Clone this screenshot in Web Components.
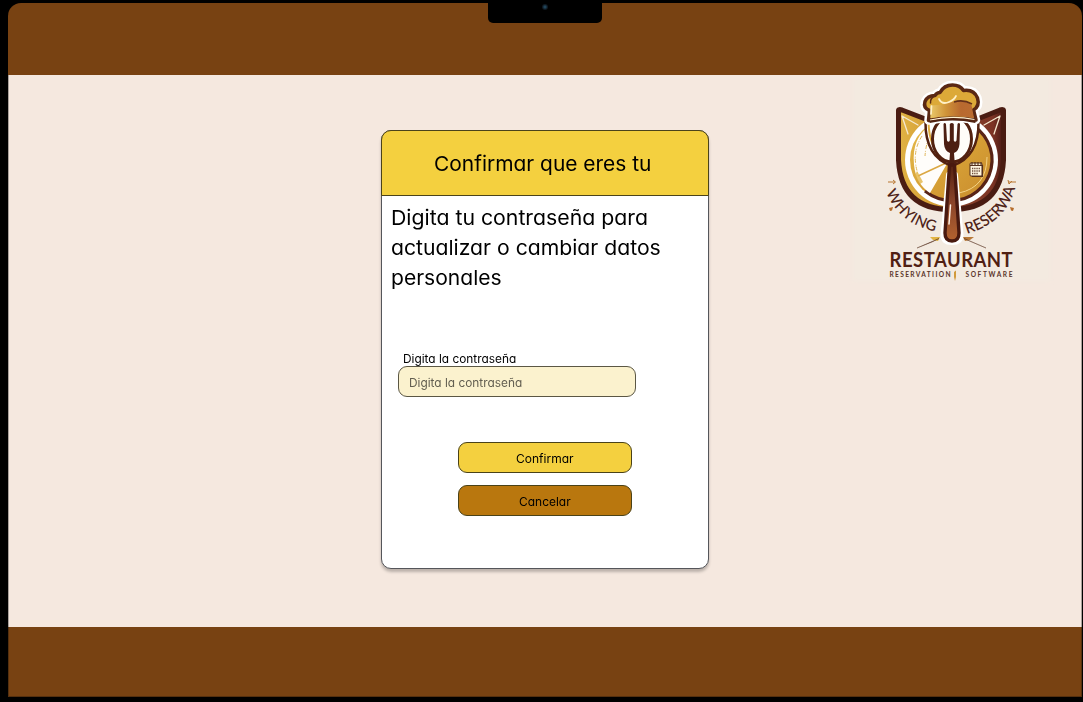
<!DOCTYPE html>
<html lang="es">
<head>
<meta charset="utf-8">
<title>Confirmar que eres tu</title>
<style>
html,body{margin:0;height:100%;background:#000;overflow:hidden}
body{font-family:Inter,"Open Sans",sans-serif;font-feature-settings:"cv11" 1;color:#000}
</style>
</head>
<body>
<device-screen>
  <confirm-card>
    <fit-text slot="title" width="217">Confirmar que eres tu</fit-text>
    <fit-text width="256">Digita tu contraseña para</fit-text>
    <fit-text width="269.5">actualizar o cambiar datos</fit-text>
    <fit-text width="110">personales</fit-text>
    <password-field slot="field">
      <fit-text slot="label" width="113">Digita la contraseña</fit-text>
      <fit-text width="113">Digita la contraseña</fit-text>
    </password-field>
    <action-button slot="actions"><fit-text width="57">Confirmar</fit-text></action-button>
    <action-button slot="actions" style="--fill:#b9770e"><fit-text width="51.5">Cancelar</fit-text></action-button>
  </confirm-card>
  <restaurant-logo></restaurant-logo>
</device-screen>
<script>
function define(name, html, ready) {
  const template = document.createElement('template');
  template.innerHTML = html;
  customElements.define(name, class extends HTMLElement {
    constructor() {
      super();
      this.attachShadow({mode: 'open'}).append(template.content.cloneNode(true));
    }
    connectedCallback() { if (ready) ready(this); }
  });
}

define('device-screen', `
<style>
:host{display:block;position:relative;box-sizing:border-box;height:702px;padding:3px 1px 5px 8px;background:#000}
.screen{display:grid;grid-template-rows:72px 552px 70px;height:694px;border-radius:13px 13px 0 0;overflow:hidden;background:#784212}
main{display:grid;grid-template-columns:328px 210px;column-gap:136px;padding-left:373px;align-items:start;background:#f5e8df;box-shadow:inset 1px 0 #aaa19c,inset -1px 0 #aaa19c}
footer{border:solid #55300f;border-width:0 1px 1px}
.notch{position:absolute;left:488px;top:0;width:114px;height:23px;border-radius:0 0 5px 5px;background:#000}
.notch i{position:absolute;left:54px;top:4px;width:6px;height:6px;border-radius:50%;background:radial-gradient(#204459 0 20%,#101b24 55%,#0b0d0f)}
</style>
<div class="screen"><header></header><main><slot></slot></main><footer></footer></div>
<div class="notch"><i></i></div>`);

define('confirm-card', `
<style>
:host{display:flex;flex-direction:column;box-sizing:border-box;width:328px;height:439px;margin-top:55px;border:1px solid #55565a;border-radius:10px;background:#fff;box-shadow:0 3px 3px #0000003d}
header{display:flex;align-items:center;justify-content:center;box-sizing:border-box;height:66px;margin:-1px -1px 0;border:1px solid #4b431a;border-radius:10px 10px 0 0;background:#f4d03f;font-size:20.4px;padding-right:5px;padding-top:1px}
.message{box-sizing:border-box;height:155px;padding:7px 0 0 9px;font-size:20.4px;line-height:30px}
.actions{display:grid;gap:12px;justify-content:center;margin-top:45px;padding-right:1px}
</style>
<header><slot name="title"></slot></header>
<div class="message"><slot></slot></div>
<slot name="field"></slot>
<div class="actions"><slot name="actions"></slot></div>`);

define('password-field', `
<style>
:host{display:block;padding-left:16px;font-size:11.5px;line-height:15px}
.label{box-sizing:border-box;padding:1px 0 0 4.500px;height:15px}
.box{box-sizing:border-box;display:flex;align-items:center;width:238px;height:31px;padding:4px 0 0 10px;border:1px solid #5b5744;border-radius:9px;background:#fbf2ce;color:#625e50}
</style>
<div class="label"><slot name="label"></slot></div><div class="box"><slot></slot></div>`);

define('action-button', `
<style>
:host{display:flex;align-items:center;justify-content:center;box-sizing:border-box;width:174px;height:31px;padding-top:2px;border:1px solid #4a4218;border-radius:9px;background:var(--fill,#f4d03f);font-size:11.5px}
</style><slot></slot>`);

/* Text line whose glyphs are widened so that it spans the given width. */
define('fit-text', `<style>:host{display:block;white-space:nowrap}span{display:inline-block;transform-origin:0 50%}</style><span><slot></slot></span>`, el => {
  const span = el.shadowRoot.querySelector('span');
  const target = +el.getAttribute('width') + .5;
  el.style.width = target + 'px';
  span.style.transform = 'scaleX(' + target / span.offsetWidth + ')';
});

define('restaurant-logo', `
<style>
:host{display:block;width:210px;height:215px;font-family:Lato,sans-serif}
svg{display:block;width:210px;height:215px}
</style>
<svg viewBox="845 75 210 215">
  <defs>
    <linearGradient id="gold" x1="0" y1="0" x2="1" y2="1"><stop offset="0" stop-color="#e6bd4d"/><stop offset=".5" stop-color="#d7a136"/><stop offset="1" stop-color="#c88a2d"/></linearGradient>
    <linearGradient id="shield" x1="0" x2="1"><stop offset="0" stop-color="#e0b244"/><stop offset=".5" stop-color="#cf952f"/><stop offset=".55" stop-color="#8c442b"/><stop offset=".9" stop-color="#7c3324"/><stop offset="1" stop-color="#471a15"/></linearGradient>
    <linearGradient id="band" x1="0" x2="1"><stop offset="0" stop-color="#e9c86a"/><stop offset=".35" stop-color="#d09539"/><stop offset=".7" stop-color="#b8692f"/><stop offset="1" stop-color="#ba6c31"/></linearGradient>
    <linearGradient id="handle" x1="0" y1="0" x2="0" y2="1"><stop offset="0" stop-color="#542213"/><stop offset=".5" stop-color="#8b452a"/><stop offset="1" stop-color="#b3622f"/></linearGradient>
    <path id="hatShape" d="M928.500 120.500L929.500 110.500Q923 108 925 101.500Q927.500 95.500 935 95.500Q937 92.500 940 92.500Q944 85 952.500 85Q960 85 963.500 90.500Q974 89 977.500 98Q980 106 973.500 110L976 120Q952 116 928.500 120.500Z"/>
    <path id="leftArc" d="M886 192Q901 227 940 232"/>
    <path id="rightArc" d="M967 234Q1008 222 1016 184"/>
    <filter id="soft" x="-10%" y="-10%" width="120%" height="120%"><feGaussianBlur stdDeviation="2"/></filter>
  </defs>
  <rect x="853" y="78" width="197" height="203" fill="#f3eae0" filter="url(#soft)"/>

  <path d="M898.500 110.500Q898.500 109 902 110L928 120H975L1000 110Q1003.500 109 1003.500 110.500V160Q1001 209.500 951 209.500Q901 209.500 898.500 160Z" fill="url(#shield)" stroke="#4a1c12" stroke-width="5" stroke-linejoin="round"/>
  <path d="M902 116L918 125M902 116L908 134M1000 116L984 125M1000 116L994 134" stroke="#f5e8cf" stroke-width="1.300" stroke-linecap="round"/>
  <circle cx="951.500" cy="160" r="46.500" fill="#fff"/>
  <circle cx="951.500" cy="160" r="41.500" fill="url(#gold)"/>
  <path d="M968 123A40.500 40.500 0 0 1 951.500 200.500Q937 200.500 925 191" fill="none" stroke="#592417" stroke-width="3.200"/>
  <path d="M914 165Q911 137 932 124L948 162L930 193Q916 184 914 165Z" fill="#fffdfa"/>
  <path d="M946 163L918 176" stroke="#dba742" stroke-width="1.500"/>
  <path d="M922 136Q911 153 918 174M932 130Q926 142 925 156" fill="none" stroke="#dfb558" stroke-width="1" stroke-dasharray="4 2 1 1"/>
  <path d="M917 171L923 182L920 184L915 175Z" fill="#e2b548" opacity=".8"/>
  <path d="M987 157Q987 187 959 193" fill="none" stroke="#f4d386" stroke-width="1"/>

  <path d="M925.500 122Q925 157 952 166Q979 157 978.500 122" fill="#fff" stroke="#53210f" stroke-width="2.500"/>
  <path d="M928.500 122Q929 149 945 159" fill="none" stroke="#e0ad3d" stroke-width="2"/>
  <ellipse cx="952" cy="139" rx="19.500" ry="23" fill="#fffdf9" stroke="#53210f" stroke-width="3"/>

  <use href="#hatShape" fill="#fff" stroke="#fff" stroke-width="8.500" stroke-linejoin="round"/>
  <use href="#hatShape" fill="#dca938" stroke="#5a2814" stroke-width="3.500" stroke-linejoin="round"/>
  <path d="M930.500 105Q940 106 952 102Q963 99 971.500 105L974 118Q952 114 930.500 118Z" fill="url(#band)"/>
  <path d="M954 102Q963 99 972 104" fill="none" stroke="#65301a" stroke-width="1.500"/>
  <path d="M930 120Q952 115 974.500 119.500" fill="none" stroke="#fff1d0" stroke-width="1.200"/>
  <path d="M929.500 122Q952 117 975.500 122" fill="none" stroke="#512312" stroke-width="2"/>
  <path d="M939 99Q942 105 949 102Q954 100 956 96M931.500 106L931 114" fill="none" stroke="#fff0c7" stroke-width="1.700" stroke-linecap="round"/>
  <path d="M935 96Q930 98 930.500 103" fill="none" stroke="#5a2814" stroke-width="1.500" stroke-linecap="round"/>

  <path d="M949.500 175L944 235Q944 241.500 952 241.500Q960 241.500 960 235L954.500 175Z" fill="#fff" stroke="#fff" stroke-width="7" stroke-linejoin="round"/>
  <path d="M943.500 124Q944.500 122 946 124L947 140.500Q948.500 143 949.800 140.500V124Q951.800 122 953.800 124V140.500Q955 143 956.500 140.500L957.500 124Q959 122 960 124L959.500 144Q959 151 954 153L956 180H948L950 153Q944.500 151 944 144Z" fill="#4d1f12"/>
  <path d="M949.500 165L945 233Q945 241 952 241Q959 241 959 233L954.500 165Z" fill="url(#handle)" stroke="#49190f" stroke-width="3.400"/>
  <path d="M950.500 205L949 224" stroke="#fff0e4" stroke-width="1.500" stroke-linecap="round"/>

  <g transform="translate(970 162)">
    <rect x="0" y="1" width="12" height="13" rx="1" fill="#fff5df" stroke="#54301d"/>
    <path d="M0 3.500H12M2 0V3M5 0V3M8 0V3M11 0V3M12.500 3V14.500H2" stroke="#54301d" stroke-width="1.100" fill="none"/>
    <path d="M2 6.500H10.500M2 9H10.500M2 11.500H8" stroke="#6b4a38" stroke-width="1.300" stroke-dasharray="1.300 .9"/>
  </g>

  <g fill="#4d2217" font-weight="500">
    <text font-size="15" textLength="66" lengthAdjust="spacing"><textPath href="#leftArc">WHYING</textPath></text>
    <text font-size="15.500" textLength="70" lengthAdjust="spacingAndGlyphs"><textPath href="#rightArc">RESERWA</textPath></text>
  </g>
  <path d="M888 182H895M893 180L895.500 182L893 184M1016 182H1009M1008 180L1009 184L1012 181" stroke="#b97731" stroke-width="1" fill="none"/>
  <path d="M889 208L893 207L892 210.500L890 211ZM1014 208L1010 207L1011 210.500L1013 211Z" fill="#b66d2c"/>
  <path d="M930 237H940L938 241L933 240Z" fill="#e2b444"/><path d="M963 237H974L970 240L965 241Z" fill="#b87938"/>
  <path d="M917 248L939 238.500L932 242ZM986 248L964 238.500L972 242Z" fill="#55301f" stroke="#55301f" stroke-width=".4"/>
  <text transform="translate(889.500 266.800) scale(.88 1)" font-size="21" font-weight="700" fill="#502013" textLength="140" lengthAdjust="spacing">RESTAURANT</text>
  <text x="889.500" y="276.500" font-size="6.600" font-weight="700" fill="#5a3429" textLength="61" lengthAdjust="spacing">RESERVATIION</text>
  <text x="965.500" y="276.500" font-size="6.600" font-weight="700" fill="#5a3429" textLength="47" lengthAdjust="spacing">SOFTWARE</text>
  <path d="M954 272L956 270.500V277L955 281L954 277Z" fill="#d19a3b"/>
</svg>`);
</script>
</body>
</html>
